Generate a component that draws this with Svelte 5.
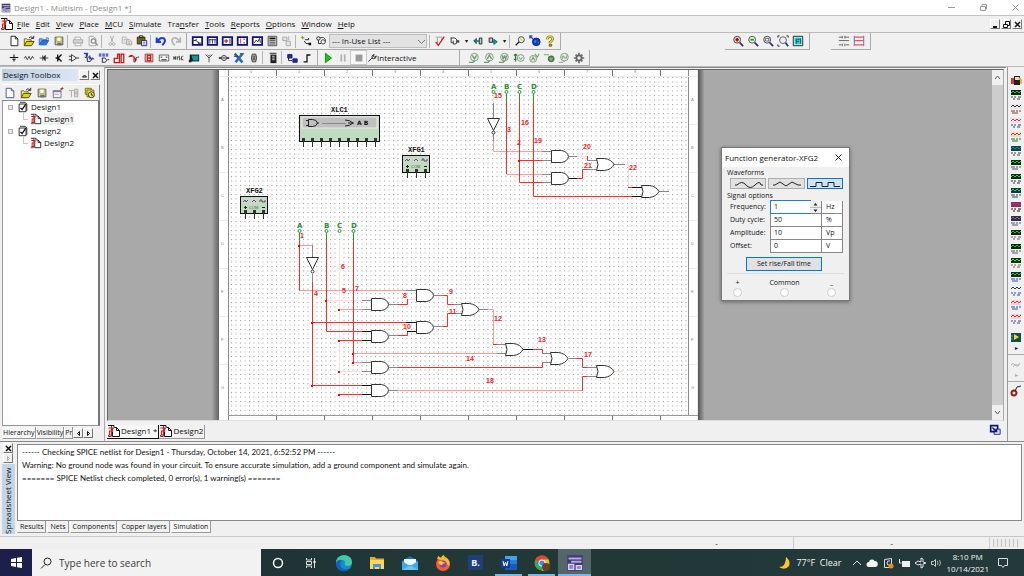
<script>
  // each icon is a list of [path, fill, stroke, strokeWidth] on a 14x14 box
  const K = '#111';
  const G = '#a4a4a4';
  const N = '#10107a';
  const R = '#d81818';
  const GR = '#6f9a6c';
  const icons = {
    new: [['M3.5 1.5h5l3 3v8h-8z', '#fff', K], ['M8.5 1.5v3h3', 'none', K]],
    newBlue: [['M2.5 1.5h6l3 3v8h-9z', '#fff', '#33449a'], ['M8.5 1.5v3h3', '#e8e850', '#33449a']],
    open: [['M1.5 12.5v-8h3l1 1h4v2', '#f4f07a', '#5d5a10'], ['M1.5 12.5l2.5-5h9l-3 5z', '#d9d321', '#3b3900'], ['M7 3.500q2-2.500 4.500-.5M12.500 1v3h-3', 'none', K]],
    folder: [['M1.5 11.500v-7h4l1 1h4v2', '#83b9ff', '#2a5fc0'], ['M1.500 11.500l3-5h8l-3 5z', '#2474ea', '#1c55b8'], ['M9 3.500h3v2', 'none', '#2a5fc0']],
    save: [['M2.500 2.500h9v9h-9z', '#cfcfc6', '#4c4c44'], ['M4.500 2.500h5v5h-5z', '#fffff0', '#b6ae20'], ['M5 9h5v3h-5z', '#6e6e66']],
    print: [['M3.500 5.500v-3h6l1 3', '#fff', G], ['M1.500 5.500h11v4h-11z', '#d6d6d6', G], ['M3.500 9.500h7v3h-7z', '#fff', G]],
    preview: [['M2.500 1.500h5l3 3v8h-8z', '#f8f8f8', G], ['M5 7a2.500 2.500 0 1 0 5 0a2.500 2.500 0 1 0-5 0M9.500 9l3 3', 'none', '#8c8c8c', 1.5]],
    cut: [['M5 1l3 7M9 1l-3 7', 'none', G], ['M3.500 10.500a1.500 1.500 0 1 0 3 0a1.500 1.500 0 1 0-3 0M7.500 10.500a1.500 1.500 0 1 0 3 0a1.500 1.500 0 1 0-3 0', 'none', G]],
    copy: [['M1.500 2.500h4l2 2v5h-6z', '#f8f8f8', G], ['M6.500 5.500h4l2 2v4h-6z', '#e4e4e4', G], ['M3 5h3M3 7h2M8 8h3M8 10h3', 'none', G]],
    paste: [['M1.500 2.500h9v8h-9z', '#6d6a18', '#2d2b08'], ['M4 1h4v2h-4z', '#ddd', K], ['M6.500 6.500h6v6h-6z', '#fff', N], ['M8 8.500h3M8 10.500h3', 'none', '#4a54c0']],
    undo: [['M2 3v5h5M3 7.500q3-5.500 7.500-3.500q3 3-2 8', 'none', '#1a3fd8', 2.4]],
    redo: [['M12 3v5h-5M11 7.500q-3-5.500-7.500-3.500q-3 3 2 8', 'none', '#b4b4b4', 2]],
    winWave: [['M2 2.500h11v9h-11z', '#fff', N, 2], ['M3 6.500h3v-2M6 6.500l3 3h3M9 8v3', 'none', K]],
    winGrid: [['M2 2.500h11v9h-11z', '#fff', N, 2], ['M3 5.500h9M4.500 5v5M7.500 5v5M10.500 5v5', 'none', '#222260']],
    winRed: [['M2 2.500h11v9h-11z', '#fff', N, 2], ['M4 7h4M6 5v4', 'none', R, 1.5], ['M10.500 4v6', 'none', K]],
    winBars: [['M2 2.500h11v9h-11z', '#fff', N, 2], ['M5.500 4v6', 'none', R], ['M9.500 4v2M9.500 8v2', 'none', K]],
    winGraph: [['M2 2.500h11v9h-11z', '#fff', N, 2], ['M4 9l2-3 2 2 2-4 1 5', 'none', K]],
    calc: [['M2.500 1.500h10v11h-10z', '#d8d8d8', '#444'], ['M4 3h7v2h-7z', '#111'], ['M4 6.500h7M4 8.500h7M4 10.500h7', 'none', '#444', 1]],
    grayDocs: [['M2 2.500h5v4h-5zM6 7.500h5v5h-5zM9 1.500v5', '#e4e4e4', G]],
    wizard: [['M3 1v4M1 3h4M2 1.500l3 3', 'none', '#9a9018'], ['M6 5.500h4v-2M5 7l2 3h5', 'none', K], ['M10 9h3v3h-3z', K]],
    database: [['M2 4a2 2 0 1 0 4 0a2 2 0 1 0-4 0M4 6v4h3', 'none', K], ['M6 3h4l2 2v3M7 8a2.500 2.500 0 1 0 5 0a2.500 2.500 0 1 0-5 0', '#eee', '#333']],
    check: [['M2 2.500h8M4 3v7M9 3v3', 'none', '#999'], ['M2 8l3 4L12 2', 'none', R, 1.500]],
    part: [['M2.500 3v6h2M2 3.500h5l3 3-2 4h-3v-4', '#fff', '#222'], ['M8 6h4v3h-4z', '#4f4f4f']],
    partLeft: [['M2 7l3-3v6z', '#168c8c', '#0a4a4a'], ['M5 7h3', 'none', '#188', 2], ['M8.500 3.500h3v7h-3z', '#ccc', K]],
    partRight: [['M2.500 3.500h4v5h-4z', '#ccc', K], ['M6 8h3M8 5l4 3-4 3z', '#1aa', '#066']],
    find: [['M5 5.500a3.500 3.500 0 1 0 7 0a3.500 3.500 0 1 0-7 0', '#f6f6da', '#222a70'], ['M6 8l-4 4', 'none', K, 1.500], ['M8 3v3h3', 'none', '#d8c810']],
    globe: [['M4 8a4.500 4.500 0 1 0 9 0a4.500 4.500 0 1 0-9 0', '#1530dd', '#0c1c90'], ['M6 6h3l-1 3-2 1zM10 8h2l-1 3z', '#25a048'], ['M1 1l4 4M1 4v-3h3', 'none', '#2040ff', 1.500]],
    help: [['M4 5q0-3 3-3t3 3q0 1.500-3 3.500v1', 'none', '#6d6808', 3], ['M4 5q0-3 3-3t3 3q0 1.500-3 3.500v1', 'none', '#e9df20', 1.500], ['M6 11h3v2h-3z', '#d5cc18', '#55520a']],
    zoomIn: [['M2 5.500a4 4 0 1 0 8 0a4 4 0 1 0-8 0', '#f0d8d8', '#333'], ['M4 5.500h4M6 3.500v4', 'none', '#b00', 2], ['M9 9l4 4', 'none', '#22308c', 2]],
    zoomOut: [['M2 5.500a4 4 0 1 0 8 0a4 4 0 1 0-8 0', '#e0f0d8', '#444'], ['M4 5.500h4', 'none', '#1a9a1a', 2], ['M9 9l4 4', 'none', '#22308c', 2]],
    zoomPage: [['M2 5.500a4 4 0 1 0 8 0a4 4 0 1 0-8 0', '#eee', '#333'], ['M4 4h4v3h-4z', '#fff', '#555'], ['M9 9l4 4', 'none', '#22308c', 2]],
    zoomFit: [['M3 6a4 4 0 1 0 8 0a4 4 0 1 0-8 0', '#eee', '#555'], ['M1 3v-2h2M11 1h2v2M1 11v2h2', 'none', K], ['M10 9l3 4', 'none', '#22308c', 2]],
    fullScreen: [['M1.500 1.500h11v11h-11z', '#cfe', K], ['M3 3h8v8h-8z', '#35c8d4'], ['M5 10v-5h4M5 7.500h3M10 4v6', 'none', '#0d5360']],
    ladder: [['M1 2.500h4M8 2.500h5M1 6.500h12M1 11.500h3M9 11.500h4M5 1v3M8 1v3M5 10v3M8 10v3', 'none', '#555']],
    rungs: [['M2 2.500h10M2 6.500h10M2 11.500h10', 'none', '#f05050', 1.500], ['M1.500 1v12M12.500 1v12', 'none', '#5555bb', 1]],
    source: [['M2 6.500h10M7 3v3M5 8.500h4M7 9v2', 'none', K, 1.200]],
    resistor: [['M1 7h1l1-2 2 4 2-4 2 4 2-4 1 2h1', 'none', '#333']],
    diode: [['M2 7h3M9 7h3M5.500 4v6M8.500 4v6l-3-3z', '#222', '#333']],
    transistor: [['M5.500 3v8M6 7l4-4M6 7l4 4M3 7h2', 'none', K, 1.500]],
    amp: [['M4 3v8l6-4zM1 5h3M1 9h3M10 7h3', 'none', '#222']],
    ttl: [['M2 2h3v3M2 6l3 1v4h3q4-2 0-5h-3M9 8h4', 'none', K], ['M1 1.500h5M4 2v4M8 4v4l4-1', 'none', '#3038d8', 1.500]],
    cmos: [['M5 7v5h3q4-2 0-5zM11 9h2', 'none', K], ['M1 2.500h3M5 2.500h3M9 2.500h3M1 4.500h3M5 4.500h3M9 4.500h3', 'none', '#3038d8', 1.500]],
    misc: [['M1.500 12.500v-5h4v-5h2v10zM9.500 2.500h3v10h-3z', '#fff', '#d01010', 1.500]],
    mixed: [['M1 6q3-4 6 0t3 3M7 5v7', 'none', '#e02020', 1.5], ['M2 5h3M10 6l-2 6M11 6h2', 'none', K]],
    indicator: [['M2.500 2.500h9v9h-9z', '#f4dada', '#803030'], ['M5 4h4v6h-4zM5 7h4', 'none', R, 1.500]],
    power: [['M1.500 3.500h11v7h-11z', '#f8f8f8', '#555'], ['M3 6h2M9 6h2M4 9h6', 'none', K]],
    text: [['M1 5v4M3 5v4M2 6v2M5 5v4M8 5h-1v2h1v2h-1M10 5v4h2M11 5h1', 'none', '#222']],
    periph: [['M2 3h11v8h-11z', '#122'], ['M4 4h8v6h-6z', '#0c9aa2'], ['M1 9h3v3h-3z', '#222']],
    rf: [['M7 12v-6M3 3l4 4 4-4M5 3l2 2 2-2', 'none', '#444']],
    electro: [['M1 7h3M10 7h3', 'none', K, 1.500], ['M4 7a3 3 0 1 0 6 0a3 3 0 1 0-6 0M6 6v2M8 6v2', '#ddd', '#333']],
    niX: [['M2 2l9 10M11 2l-8 10', 'none', '#2d68a8', 3], ['M8 2h5M1 5h5', 'none', '#333']],
    connector: [['M5 2.500h4q2 4 0 9h-4q-2-5 0-9z', '#ddd', '#222'], ['M6 4v6M8 4v6', 'none', K]],
    mcu: [['M4 3h7v10h-7z', '#222'], ['M3 1.500h8', 'none', K], ['M6 5h3M6 7h3M6 9h3', 'none', '#ddd']],
    hier: [['M2 3h5v4h-5zM8 8h5v4h-5z', '#2a318e', N], ['M3 7v3h4', 'none', K]],
    bus: [['M3 11.500h4v-8h4', 'none', K, 1.500]],
    play: [['M4 1.500v11l7-5.500z', '#18c418', '#0a860a']],
    pause: [['M4 3h2v8h-2zM8 3h2v8h-2z', '#b0b0b0']],
    stop: [['M3 3h8v8h-8z', '#9a9a9a']],
    wrench: [['M2 12l5-5M7 7q-1-4 3-5l-1 3 2 1 2-2q0 4-4 4z', 'none', K, 1.200]],
    probeV: [['M3 6a4.500 4.500 0 1 0 9 0a4.500 4.500 0 1 0-9 0', '#e4efe2', GR], ['M5 4l2.500 4L10 4M1 12h5l2-2', 'none', GR, 1.500]],
    probeA: [['M3 6a4.500 4.500 0 1 0 9 0a4.500 4.500 0 1 0-9 0', '#e4efe2', GR], ['M5 8l2.500-4.500L10 8M1 12h5l2-2', 'none', GR, 1.500]],
    probeW: [['M3 6a4.500 4.500 0 1 0 9 0a4.500 4.500 0 1 0-9 0', '#e4efe2', GR], ['M5 4l1 4 1.500-3L9 8l1-4M1 12h5l2-2', 'none', GR, 1.500]],
    probeD: [['M5 7a4 4 0 1 0 8 0a4 4 0 1 0-8 0', '#e4efe2', GR], ['M7 6l2 3 2-3', 'none', GR], ['M1 3.500h4M3 2v9M1 8.500h3', 'none', '#3d713a', 1.500]],
    probeAV: [['M2 8a4 4 0 1 0 8 0a4 4 0 1 0-8 0', '#e4efe2', GR], ['M4 10l2-4 2 4M8 2l3 4 2-4', 'none', GR, 1.200]],
    probeRef: [['M6 8a3.500 3.500 0 1 0 7 0a3.500 3.500 0 1 0-7 0', '#57834f', '#3d713a'], ['M1 3h6M8 7l1.500 2L11 7', 'none', '#8db58a', 1.500]],
    probeDig: [['M3 6a4.500 4.500 0 1 0 9 0a4.500 4.500 0 1 0-9 0', '#e4efe2', GR], ['M5 8v-3h2v2h3v-3M1 12h5l2-2', 'none', GR]],
    gear: [['M7 1v12M1 7h12M3 3l8 8M11 3l-8 8', 'none', '#6a6a6a', 2], ['M4 7a3 3 0 1 0 6 0a3 3 0 1 0-6 0', '#f0f0f0', '#666', 2]],
    rename: [['M1.500 4.500h9v8h-9z', '#f4f4f4', '#667'], ['M1 4h10v2h-10z', '#6d80a8'], ['M3 8.500h5', 'none', '#99a'], ['M10 3l3-2', 'none', R, 2]],
    tag: [['M1 4h6M4 4v8M7.500 2.500h4v9h-4zM8 6h3M8 8h3', '#ddd', G]],
    history: [['M1.500 1.500h7v7h-7z', '#e5dd2a', '#6a6510'], ['M3.500 3.500h8v8h-8z', '#f0e960', '#6a6510'], ['M5 9a3.500 3.500 0 1 0 7 0a3.500 3.500 0 1 0-7 0', '#ffee30', '#224'], ['M8.500 7v2.500h2', 'none', N]],
    design: [['M2.500 3.500h8v9h-8z', '#fff', K], ['M3.500 1.500h6l2 2v8', 'none', '#222'], ['M4 8l2 2 4-6', 'none', K, 1.500]],
    sheet: [['M1 1.500h6v4', '#fff', K], ['M7.500 3.500h2l3 3v6h-7v-5', '#fff', K], ['M9.500 3.500v3h3', 'none', K], ['M1.500 4h4v3h-3v4h3M4.500 2v10', 'none', '#d02020', 1.200], ['M1.500 11v1.500h3', 'none', '#444']],
    cascade: [['M2 2h8v7h-8z', '#fff', N, 2], ['M6 6h7v6h-7z', '#dbe2ff', N], ['M4 4l5 5M9 6v3h-3', 'none', N, 1.500]],
    app: [['M1 1h12v12h-12z', '#3d3c78'], ['M2 3.500h10M4 6h8', 'none', '#b9a6d8', 1.500], ['M2 8h4v4h-4zM8 9h4v3h-4z', '#8d86b8', '#dcd4ee']]
  };

  const fileTools = [
    ['New', 'new'], ['Open', 'open'], ['Open sample', 'folder'], ['Save', 'save'], null,
    ['Print', 'print'], ['Print preview', 'preview'], null,
    ['Cut', 'cut'], ['Copy', 'copy'], ['Paste', 'paste'], null, ['Undo', 'undo'], ['Redo', 'redo']
  ];
  const viewTools = [
    ['Design Toolbox', 'winWave'], ['Spreadsheet View', 'winGrid'], ['SPICE Netlist Viewer', 'winRed'],
    ['Breadboard', 'winBars'], ['Grapher', 'winGraph'], ['Postprocessor', 'calc'], ['Parent sheet', 'grayDocs'], null,
    ['Component Wizard', 'wizard'], ['Database Manager', 'database']
  ];
  const partTools = [
    ['Source', 'source'], ['Basic', 'resistor'], ['Diode', 'diode'], ['Transistor', 'transistor'], ['Analog', 'amp'],
    ['TTL', 'ttl'], ['CMOS', 'cmos'], ['Misc digital', 'misc'], ['Mixed', 'mixed'], ['Indicator', 'indicator'],
    ['Power', 'power'], ['Misc', 'text'], ['Peripherals', 'periph'], ['RF', 'rf'], ['Electromechanical', 'electro'],
    ['NI', 'niX'], ['Connector', 'connector'], null, ['MCU', 'mcu'], null, ['Hierarchical block', 'hier'], ['Bus', 'bus']
  ];
  const zoomTools = [['Zoom in', 'zoomIn'], ['Zoom out', 'zoomOut'], ['Zoom area', 'zoomPage'], ['Zoom sheet', 'zoomFit'], ['Full screen', 'fullScreen']];
  const probeTools = [
    ['Voltage', 'probeV'], ['Current', 'probeA'], ['Power', 'probeW'], ['Differential', 'probeD'],
    ['Voltage and current', 'probeAV'], ['Reference', 'probeRef'], ['Digital', 'probeDig'], ['Probe settings', 'gear']
  ];
  const boxTools = [['New design', 'newBlue'], ['Open design', 'open'], ['Save design', 'save'], ['Close design', 'rename'], ['Rename', 'tag'], ['History', 'history']];

  const menus = [
    ['', 'F', 'ile'], ['', 'E', 'dit'], ['', 'V', 'iew'], ['', 'P', 'lace'], ['', 'M', 'CU'], ['', 'S', 'imulate'],
    ['Tra', 'n', 'sfer'], ['', 'T', 'ools'], ['', 'R', 'eports'], ['', 'O', 'ptions'], ['', 'W', 'indow'], ['', 'H', 'elp']
  ];

  // right-hand instrument strip: screen colour, trace colour, base colour
  const instruments = [
    ['Function generator', '#0a2c12', '#2fbf4a', '#444'], ['Wattmeter', '#e8e8e8', '#333', '#933'],
    ['Oscilloscope', '#f3dde2', '#c04070', '#3d3d6a'], ['Four channel oscilloscope', '#e6e2c0', '#d03030', '#2d702d'],
    ['Bode plotter', '#0b4a38', '#2a70d8', '#444'], ['Frequency counter', '#083008', '#30c030', '#555'],
    ['Word generator', '#0c2c12', '#35d050', '#333'], ['Logic converter', '#0b3a44', '#2fd050', '#345'],
    ['Logic analyzer', '#b02050', '#3060c0', '#111'], ['IV analyzer', '#1a3560', '#d84040', '#555'],
    ['Distortion analyzer', '#152515', '#38b838', '#666'], ['Spectrum analyzer', '#052a05', '#32b832', '#555'],
    ['Network analyzer', '#0a3a0a', '#48d848', '#666'], ['Agilent generator', '#10301c', '#38b848', '#3048d0'],
    ['Agilent multimeter', '#eef', '#333', '#3040d8'], ['Agilent oscilloscope', '#ecd0d8', '#d04060', '#3848b8'],
    ['Tektronix oscilloscope', '#ecd0d8', '#d03030', '#553a90']
  ];

  const RED = '#ff2a2a';
  const PINK = '#ff9c9c';
  const PALE = '#ffdcdc';
  const GRAY = '#888';
  const BLACK = '#111';
  const wires = [
    // upper circuit
    [PALE, 'M493.500 94V103M577 156.500H587M625 164.500H628.500V187'],
    [PINK, 'M493.500 141V151.500H542M506.500 174.500H542'],
    [RED, 'M506.500 102V174M519.500 102V182.500H542M519.500 160.500H542M533.500 102V196.500H632M587.500 156V160.500M577 178.500H582.500V169.500H587M628 187.500H632'],
    [GRAY, 'M493.500 103V118M493.500 134V141M542 151.500H551M542 160.500H551M542 174.500H551M542 182.500H551M569 156.500H577M587 160.500H597M587 169.500H597M613 164.500H625M659 191.500H669'],
    [BLACK, 'M569 178.500H577M632 187.500H642M632 196.500H642'],
    // lower circuit
    [PALE, 'M339.500 241V394M326.500 300.500H362M339.500 371.500H362M407 299.500H416M614 371.500H623'],
    [PINK, 'M299.500 245.500H312.500M299 290.500H406M339.500 309.500H362M353.500 353.500H497M353.500 362.500H362M398 390.500H582.500M488 309.500H493.500V344'],
    [RED, 'M299.500 241V290.500M312.500 282V385.500H362M312.500 322.500H406M326.500 241V331.500H362M353.500 241V362.500M339 340.500H362M339 394.500H362M398 304.500H407.500V299M398 335.500H407.500V331M398 367.500H542.500V362M443 295.500H447.500V304.500H453M443 326.500H447.500V313.500H453M493 344.500H497M533 349.500H542.500V353.500M577 358.500H582.500V367.500H587M582.500 391V376.500H587'],
    [GRAY, 'M312.500 245V257M312.500 274V282M362 300.500H371M362 309.500H371M362 362.500H371M362 371.500H371M389 304.500H398M389 335.500H398M389 367.500H398M389 390.500H398M406 290.500H416M434 295.500H443M434 326.500H443M453 304.500H463M453 313.500H463M479 309.500H488M497 344.500H507M497 353.500H507M542 353.500H552M542 362.500H552M569 358.500H577M587 367.500H597M587 376.500H597'],
    [BLACK, 'M362 331.500H371M362 340.500H371M362 385.500H371M362 394.500H371M406 322.500H416M407 331.500H416M523 349.500H533'],
    // input stubs
    ['#2a962a', 'M506.500 94V102M519.500 94V102M533.500 94V102M299.500 233V241M326.500 233V241M353.500 233V241']
  ];
  const andGates = [[551, 156], [551, 178], [371, 304], [371, 336], [371, 367], [371, 390], [416, 295], [416, 327]];
  const orGates = [[597, 164], [642, 191], [462, 309], [506, 349], [551, 358], [597, 371]];
  const inverters = [[493.5, 118.5], [312.5, 257.5]];
  const dots = [[519, 160], [299, 245], [326, 300], [312, 322], [312, 385], [339, 309], [339, 340], [339, 371], [339, 394], [353, 353], [353, 362]];
  const pins = [
    ['A', 493, 92], ['B', 506, 92], ['C', 519, 92], ['D', 533, 92],
    ['A', 299, 231], ['B', 326, 231], ['C', 339, 231], ['D', 353, 231]
  ];
  const nets = [
    [15, 494, 98], [3, 507, 132], [16, 521, 125], [2, 517, 145], [19, 534, 143], [20, 583, 149], [21, 584, 168], [22, 629, 170],
    [1, 300, 238], [6, 341, 269], [5, 342, 293], [7, 355, 291], [4, 314, 296], [8, 403, 298], [9, 449, 294], [10, 403, 329],
    [11, 449, 314], [12, 494, 321], [13, 538, 342], [14, 466, 361], [17, 584, 357], [18, 486, 383]
  ];
  const ticks = [276, 324, 372, 420, 468, 516, 564, 612, 660];
  const zones = ['A', 'B', 'C', 'D', 'E', 'F', 'G'];

  let params = $state([
    { id: 'freq', label: 'Frequency:', value: '1', unit: 'Hz' },
    { id: 'duty', label: 'Duty cycle:', value: '50', unit: '%' },
    { id: 'amp', label: 'Amplitude:', value: '10', unit: 'Vp' },
    { id: 'offset', label: 'Offset:', value: '0', unit: 'V' }
  ]);
  let waveform = $state('square');
  const waveforms = [
    ['sine', 'M4 6h2q5-5 9 0t9 0t6 0h2'],
    ['triangle', 'M4 6h2l5-3 6 4 6-4 6 3h3'],
    ['square', 'M2 7.500h6v-4h6v4h6v-4h6v4h6']
  ];
</script>

{#snippet icon(name)}
  <svg class="icon" width="14" height="14" viewBox="0 0 14 14" aria-hidden="true">
    {#each icons[name] as [d, fill, stroke, w]}
      <path {d} fill={fill} stroke={stroke ?? 'none'} stroke-width={w ?? 1} />
    {/each}
  </svg>
{/snippet}

{#snippet tools(list)}
  {#each list as tool}
    {#if tool}
      <button class="tool" title={tool[0]} aria-label={tool[0]}>{@render icon(tool[1])}</button>
    {:else}
      <span class="sep"></span>
    {/if}
  {/each}
{/snippet}

{#snippet generator(x, y, name)}
  <g transform="translate({x} {y})">
    <text class="part-name" x="6" y="-3">{name}</text>
    <rect x="0.5" y="0.5" width="27" height="17" fill="#c0dcc0" stroke="#111" />
    <path d="M2 3h7v4h-7zM11 3h6v4h-6zM19 3h7v4h-7z" fill="#d9d0d9" />
    <path d="M3 6l2-2 1 2 2-2M12 6l2-2 2 2M20 6v-2h2v2h3v-2" fill="none" stroke="#555" />
    <path d="M4 11.500h3M5.500 10v3M22 11.500h3" stroke="#222" />
    <text class="micro" x="9" y="13">COM</text>
    <path d="M5.500 15v8M14.500 15v8M23.500 15v8" stroke="#333" />
    <path d="M4 14h3v3h-3zM13 14h3v3h-3zM22 14h3v3h-3z" fill="#333" />
  </g>
{/snippet}

<div class="app">
  <header class="titlebar">
    {@render icon('app')}
    <span class="title">Design1 - Multisim - [Design1 *]</span>
    <div class="window-controls">
      <button aria-label="Minimize"><svg width="9" height="9"><path d="M1 4.500h7" /></svg></button>
      <button aria-label="Restore"><svg width="9" height="9"><path d="M1.500 3.500h5v4h-5zM3 3V1.500h4.500v4.500H7" stroke="#444" /></svg></button>
      <button aria-label="Close"><svg width="9" height="9"><path d="M1.500 1.500l6 6M7.500 1.500l-6 6" /></svg></button>
    </div>
  </header>

  <nav class="menubar">
    {@render icon('sheet')}
    {#each menus as [pre, key, post]}
      <button class="menu">{pre}<u>{key}</u>{post}</button>
    {/each}
    <div class="mdi-controls">
      <button class="bevel" aria-label="Minimize design"><svg width="7" height="7"><path d="M1 6h4" stroke-width="2" /></svg></button>
      <button class="bevel" aria-label="Restore design"><svg width="7" height="7"><path d="M.5 3.500h4v3h-4zM2.500 3V.500h4v4H5" /></svg></button>
      <button class="bevel" aria-label="Close design"><svg width="7" height="7"><path d="M1 1l5 5M6 1L1 6" stroke-width="1.500" /></svg></button>
    </div>
  </nav>

  <div class="toolbar">
    <div class="group">{@render tools(fileTools)}</div>
    <div class="group">
      {@render tools(viewTools)}
      <span class="in-use">
        <select aria-label="In-use list"><option>--- In-Use List ---</option></select>
        <svg width="9" height="9"><path d="M1 3l3.500 3.500L8 3" /></svg>
      </span>
      <span class="sep"></span>
      {@render tools([['ERC', 'check'], ['Transfer', 'part']])}
      <button class="caret" aria-label="Transfer options">▾</button>
      {@render tools([['Back annotate', 'partLeft'], ['Forward annotate', 'partRight']])}
      <button class="caret" aria-label="Annotate options">▾</button>
      <span class="sep"></span>
      {@render tools([['Find', 'find'], ['Web', 'globe'], ['Help', 'help']])}
    </div>
    <div class="group float zoom">{@render tools(zoomTools)}</div>
    <div class="group float">{@render tools([['Ladder', 'ladder'], ['Rungs', 'rungs']])}</div>
  </div>

  <div class="toolbar second">
    <div class="group">{@render tools(partTools)}</div>
    <div class="group sim">
      {@render tools([['Run', 'play'], ['Pause', 'pause']])}
      <span class="sunk">{@render tools([['Stop', 'stop']])}</span>
      <button class="interactive">{@render icon('wrench')}Interactive</button>
    </div>
    <div class="group float">{@render tools(probeTools)}</div>
  </div>

  <main class="main">
    <aside class="toolbox">
      <div class="panel-head">
        <h2>Design Toolbox</h2>
        <button class="bevel" aria-label="Collapse panel"><svg width="7" height="7"><path d="M1.500 5l2-2 2 2z" stroke="#999" /></svg></button>
        <button class="bevel" aria-label="Close panel"><svg width="7" height="7"><path d="M1 1l5 5M6 1L1 6" stroke-width="1.500" /></svg></button>
      </div>
      <div class="box-tools">{@render tools(boxTools)}</div>
      <ul class="tree">
        {#each ['Design1', 'Design2'] as name, i}
          <li>
            <div class="node"><span class="twist"></span>{@render icon('design')}<span>{name}</span></div>
            <ul>
              <li class="node leaf"><span class="branch"></span>{@render icon('sheet')}<span class:picked={i === 0}>{name}</span></li>
            </ul>
          </li>
        {/each}
      </ul>
      <div class="tabs box-tabs">
        <button class="active">Hierarchy</button>
        <button>Visibility</button>
        <button>Pr</button>
        <button class="bevel" aria-label="Previous tab"><svg width="7" height="7"><path d="M4.500 1.500v4l-2-2z" fill="#111" /></svg></button>
        <button class="bevel" aria-label="Next tab"><svg width="7" height="7"><path d="M2.500 1.500v4l2-2z" fill="#111" /></svg></button>
      </div>
    </aside>

    <section class="workspace">
      <div class="canvas">
        <svg class="sheet" width="492" height="350" viewBox="212 70 492 350">
          <defs>
            <pattern id="grid" x="231" y="77" width="4.5" height="4.5" patternUnits="userSpaceOnUse">
              <rect width="1" height="1" fill="#999" />
            </pattern>
            <linearGradient id="edge">
              <stop offset="0" stop-color="#a6a6a6" />
              <stop offset="1" stop-color="#636363" />
            </linearGradient>
            <linearGradient id="edge-right">
              <stop offset="0" stop-color="#555" />
              <stop offset="1" stop-color="#a0a0a0" />
            </linearGradient>
          </defs>
          <rect x="212" y="70" width="7" height="350" fill="url(#edge)" />
          <rect x="698" y="70" width="6" height="350" fill="url(#edge-right)" />
          <rect x="219" y="70" width="479" height="350" fill="#fff" />
          <rect x="229" y="77" width="460" height="338" fill="url(#grid)" />
          <path d="M228.500 70V420M688.500 70V415" stroke="#8c8c8c" />
          <path d="M219 76.500H698M219 172.500h9M219 220.500h9M219 268.500h9M219 316.500h9M219 364.500h9M689 124.500h9M689 172.500h9M689 220.500h9M689 268.500h9M689 316.500h9M689 364.500h9M697.500 70V420" stroke="#ececec" />
          <path d="M228 415.500H698" stroke="#999" />
          {#each ticks as x, i}
            <path d="M{x + 0.5} 70v6M{x + 0.5} 416v4" stroke="#777" />
            <text class="ruler" x={x - 26} y="73">{i}</text>
          {/each}
          {#each zones as z, i}
            <text class="ruler" x="221" y={101 + i * 48}>{z}</text>
            <text class="ruler" x="691" y={101 + i * 48}>{z}</text>
          {/each}

          <g transform="translate(299 115)">
            <text class="part-name" x="32" y="-3">XLC1</text>
            <rect x="0.5" y="0.5" width="80" height="26" fill="#c0dcc0" stroke="#111" />
            <rect x="3" y="2" width="75" height="11" fill="#c0c0c0" stroke="#e8e8e8" />
            <path d="M7 5.500h2M7 10.500h2M9.500 4.500h4q4 0 5 3.500q-1 3.500-5 3.500h-4zM18 8h2M46 5q5 0 8 3q-3 3-8 3M49 8h6" fill="none" stroke="#222" />
            <path d="M23 8.500h24" stroke="#888" />
            <text class="xlc-text" x="58" y="10">A B</text>
            {#each Array(9) as _, i}
              <path d="M{4.5 + i * 9} 24v8" stroke="#333" />
              <rect x={3 + i * 9} y="23" width="3" height="3" fill="#333" />
            {/each}
          </g>
          {@render generator(402, 155, 'XFG1')}
          {@render generator(240, 196, 'XFG2')}

          {#each wires as [color, d]}
            <path {d} fill="none" stroke={color} />
          {/each}
          {#each dots as [x, y]}
            <rect x={x - 1} {y} width="2" height="2" fill="#f00" />
          {/each}
          {#each andGates as [x, y]}
            <path d="M{x + 0.5} {y - 5.5}h10q6 1 7 6q-1 5-7 6h-10z" class="gate" />
          {/each}
          {#each orGates as [x, y]}
            <path d="M{x - 0.5} {y - 5.5}h8q7 1 9.500 6q-2.500 5-9.500 6h-8q3-6 0-12z" class="gate" />
          {/each}
          {#each inverters as [x, y]}
            <path d="M{x - 6} {y}h12l-6 12z" class="gate" />
            <circle cx={x} cy={y + 14} r="1.500" class="gate" />
          {/each}
          {#each pins as [name, x, y]}
            <text class="pin" x={x - 2} y={y - 3}>{name}</text>
            <circle cx={x + 0.5} cy={y} r="1.500" fill="#fff" stroke="#2a962a" />
          {/each}
          {#each nets as [n, x, y]}
            <text class="net" {x} {y}>{n}</text>
          {/each}
        </svg>
        <div class="scrollbar">
          <button aria-label="Scroll up"><svg width="9" height="9"><path d="M2 6l2.500-3L7 6" /></svg></button>
          <span class="thumb"></span>
          <button aria-label="Scroll down"><svg width="9" height="9"><path d="M2 3l2.500 3L7 3" /></svg></button>
        </div>
      </div>
      <div class="doc-tabs">
        <button class="active">{@render icon('sheet')}Design1 *</button>
        <button>{@render icon('sheet')}Design2</button>
        <span class="tool cascade">{@render icon('cascade')}</span>
      </div>

      <form class="dialog" aria-label="Function generator-XFG2">
        <div class="dialog-title">
          <span>Function generator-XFG2</span>
          <button type="button" aria-label="Close dialog"><svg width="9" height="9"><path d="M1.500 1.500l6 6M7.500 1.500l-6 6" /></svg></button>
        </div>
        <div class="dialog-body">
          <div class="caption">Waveforms</div>
          <div class="waves">
            {#each waveforms as [name, d]}
              <button type="button" class:on={waveform === name} aria-label={name} onclick={() => (waveform = name)}>
                <svg width="34" height="9" viewBox="0 0 34 9"><path {d} /></svg>
              </button>
            {/each}
          </div>
          <div class="caption">Signal options</div>
          <div class="params">
            {#each params as p, i}
              <label for={p.id}>{p.label}</label>
              <span class="field" class:focus={i === 0}>
                <input id={p.id} bind:value={p.value} />
                {#if i === 0}
                  <svg class="spin" width="11" height="12"><path d="M0 6.500h11" /><path d="M5.500 2l2 2.500h-4zM5.500 11l2-2.500h-4z" /></svg>
                {/if}
              </span>
              <span class="unit">{p.unit}</span>
            {/each}
          </div>
          <button type="button" class="rise">Set rise/Fall time</button>
          <div class="terminals">
            <label><span>+</span><input type="radio" name="terminal" /></label>
            <label><span>Common</span><input type="radio" name="terminal" /></label>
            <label><span>_</span><input type="radio" name="terminal" /></label>
          </div>
        </div>
      </form>
    </section>

    <aside class="instruments">
      <button class="instrument" aria-label="Multimeter">
        <svg width="12" height="11"><path d="M1 3h3v6h-3z" fill="#d33" /><path d="M4 1h6v9h-6z" fill="#222" /><path d="M5 2h4v3h-4z" fill="#ddd" /><path d="M9 3l2 2v4" stroke="#e0c020" stroke-width="2" fill="none" /></svg>
      </button>
      {#each instruments as [name, screen, trace, base], i}
        <button class="instrument" aria-label={name}>
          <svg width="12" height="11">
            <path d="M1 1h10v5h-10z" fill={screen} />
            <path d="M1 4l2-2 2 2 2-2 2 2 2-2" fill="none" stroke={trace} />
            <path d={i % 2 ? 'M1 8h4M6 8h2M9 8h2M2 10h6' : 'M1 8h2M4 8h2M8 8h3M3 10h2M7 10h3'} stroke={base} />
          </svg>
        </button>
      {/each}
      <button class="instrument lab" aria-label="LabVIEW">
        <svg width="12" height="11"><path d="M1 1h10v9h-10z" fill="#184a48" /><path d="M4 2v6l5-3z" fill="#f0e020" /><path d="M1 4h2M1 7h2" stroke="#30b0ff" /></svg>
      </button>
      <span class="more">▸</span>
      <hr />
      <button class="instrument" aria-label="Probe clip">
        <svg width="12" height="11"><path d="M1 6q2-3 4 0t5-2M3 8q3-4 6-1" fill="none" stroke="#b0b0b0" /></svg>
      </button>
      <span class="more pale">▸</span>
      <hr />
      <button class="instrument" aria-label="Current clamp">
        <svg width="12" height="12"><path d="M1.500 8a2.500 2.500 0 1 0 5 0a2.500 2.500 0 1 0-5 0" fill="#f0f0f0" stroke="#a01818" stroke-width="2" /><path d="M5 6l2-4 4-1" fill="none" stroke="#222" /></svg>
      </button>
    </aside>
  </main>

  <section class="spreadsheet">
    <div class="side">
      <button class="bevel" aria-label="Close spreadsheet"><svg width="7" height="7"><path d="M1 1l5 5M6 1L1 6" stroke-width="1.500" /></svg></button>
      <button class="bevel" aria-label="Expand spreadsheet"><svg width="7" height="7"><path class="off" d="M2.500 1.500v4l2-2z" /></svg></button>
      <h2>Spreadsheet View</h2>
    </div>
    <div class="log-area">
      <div class="log">
        <p>------ Checking SPICE netlist for Design1 - Thursday, October 14, 2021, 6:52:52 PM ------</p>
        <p>Warning: No ground node was found in your circuit. To ensure accurate simulation, add a ground component and simulate again.</p>
        <p>======= SPICE Netlist check completed, 0 error(s), 1 warning(s) =======</p>
      </div>
      <div class="tabs">
        <button>Results</button>
        <button class="nets">Nets</button>
        <button>Components</button>
        <button>Copper layers</button>
        <button class="active">Simulation</button>
      </div>
    </div>
  </section>

  <footer class="status">
    <span class="msg"></span>
    <span class="cell">-</span>
    <span class="cell">-</span>
    <span class="meter"></span>
  </footer>

  <div class="taskbar">
    <button class="start" aria-label="Start">
      <svg width="11" height="11"><path d="M0 2l5-1v4H0zM6 .8L11 0v5H6zM0 6h5v4l-5-1zM6 6h5v5l-5-.8z" fill="#fff" /></svg>
    </button>
    <label class="search">
      <svg width="12" height="12"><path d="M4 4.500a3.500 3.500 0 1 0 7 0a3.500 3.500 0 1 0-7 0M5 7.500L1 11.500" fill="none" stroke="#222" /></svg>
      <input placeholder="Type here to search" />
    </label>
    <button class="task" aria-label="Cortana"><svg width="12" height="12"><circle cx="6" cy="6" r="4.500" fill="none" stroke="#fff" stroke-width="1.500" /></svg></button>
    <button class="task" aria-label="Task View"><svg width="12" height="12"><path d="M1.500 1v2h5V1M1.500 11V9h5v2M1.500 4.500h5v3h-5zM9.500 1v10" fill="none" stroke="#ddd" /><path d="M8.500 4h2v2h-2z" fill="#fff" /></svg></button>
    <button class="task" aria-label="Edge">
      <svg width="18" height="18"><circle cx="9" cy="9" r="8" fill="#1689d8" /><path d="M1 9q0-7 8-8q8 1 8 7q0 4-5 4q-3 0-2-3q0-3-3-3q-5 0-6 3z" fill="#40c9a2" /><path d="M1 9q2-4 6-3q-3 3-1 7q3 4 9 1q-3 4-7 3q-7-1-7-8z" fill="#1263b8" /></svg>
    </button>
    <button class="task" aria-label="File Explorer">
      <svg width="18" height="18"><path d="M2 3h5l1 1.500h8V15H2z" fill="#e8a92a" /><path d="M2 6h14v9H2z" fill="#ffd65c" /><path d="M5 10h8v5h-2v-2H7v2H5z" fill="#3f9be0" /></svg>
    </button>
    <button class="task" aria-label="Mail">
      <svg width="18" height="18"><path d="M1 7l8-5 8 5v9H1z" fill="#1272c8" /><path d="M3 5h12v6H3z" fill="#f5faff" /><path d="M1 7l8 5 8-5v9H1z" fill="#3dabf0" /><path d="M1 16l8-5 8 5z" fill="#65c6fb" /></svg>
    </button>
    <button class="task" aria-label="Firefox">
      <svg width="18" height="18"><circle cx="9" cy="10" r="7" fill="#ff5a2a" /><path d="M3 5q1-2 1-3 2 1 3 2 1-3 3-3 0 2 3 3 4 4 2 8-6-7-12-7z" fill="#ffb82a" /><circle cx="9" cy="10" r="3.500" fill="#7b3fd0" /><path d="M4 8q3-2 5 0l3 1q-3 0-4 2-2 1-4-3z" fill="#ffc830" /></svg>
    </button>
    <button class="task" aria-label="B"><span class="b-tile">B.</span></button>
    <button class="task running" aria-label="Word">
      <svg width="18" height="18"><path d="M5 2h12v4H5z" fill="#41a5ee" /><path d="M5 6h12v4H5z" fill="#2b7cd3" /><path d="M5 10h12v6H5z" fill="#185abd" /><path d="M1 5h9v9H1z" fill="#103f91" /><path d="M3 7l1.200 5 1.300-4 1.300 4L8 7" fill="none" stroke="#fff" /></svg>
    </button>
    <button class="task running" aria-label="Chrome">
      <svg width="18" height="18"><circle cx="9" cy="9" r="7.500" fill="#3aa757" /><path d="M2.500 5q2-3.500 6.500-3.500T15.500 5.500H9L5.500 9z" fill="#ea4335" /><path d="M15.500 5.500q2 5-1 8.500T8.500 16.500L12 9.500 11 5.500z" fill="#fbbc05" /><circle cx="9" cy="9" r="3.500" fill="#fff" /><circle cx="9" cy="9" r="2.600" fill="#4285f4" /><circle cx="13" cy="13" r="4" fill="#6a3f2c" /></svg>
    </button>
    <button class="task running current" aria-label="Multisim">{@render icon('app')}</button>

    <div class="tray">
      <svg width="14" height="14"><path d="M8 1q5 4 3 9q-4 5-10 1q7 0 7-10z" fill="#ffc52e" /></svg>
      <span class="weather">77°F&nbsp; Clear</span>
      <svg width="10" height="10"><path d="M1 7l4-4 4 4" fill="none" stroke="#ddd" /></svg>
      <svg width="12" height="12"><path d="M3 10a2.500 2.500 0 0 1 0-5a3 3 0 0 1 5.500-1a3 3 0 0 1 .5 6z" fill="#f4f4f4" /></svg>
      <svg width="12" height="12"><path d="M2.500 2.500l7-1v9h-7z" fill="none" stroke="#ddd" /><path d="M8 4q-3-1-3 2t3 2" fill="none" stroke="#ddd" /><circle cx="9" cy="9" r="2.500" fill="#f08a1d" /></svg>
      <svg width="12" height="12"><path d="M4 4h8v6H4z" fill="#f0f0f0" /><path d="M1.500 2v4h2" fill="none" stroke="#eee" /></svg>
      <svg width="12" height="12"><path d="M1 6l3-2 3 1V1l2 1v3l3 1-3 1v3l-2 1V7L4 8z" fill="none" stroke="#e4e4e4" /></svg>
      <svg width="12" height="12"><path d="M1.500 4.500h2l2-2v7l-2-2h-2z" fill="none" stroke="#ccc" /><path d="M7.500 4q1 2 0 4M9.500 3q2 3 0 6" fill="none" stroke="#aaa" /></svg>
      <time class="clock">8:10 PM<br />10/14/2021</time>
      <svg width="12" height="12"><path d="M1.500 1.500h9v7h-3l-1.500 2-1.500-2h-3z" fill="none" stroke="#ddd" /></svg>
    </div>
  </div>
</div>

<style>
  :global(body) {
    margin: 0;
  }

  .app {
    display: flex;
    flex-direction: column;
    min-height: 100vh;
    background: #f0f0f0;
    color: #111;
    font-family: 'Open Sans', 'Noto Sans', sans-serif;
    font-size: 8px;
    line-height: 12px;
    overflow: hidden;
  }

  button {
    display: inline-flex;
    align-items: center;
    justify-content: center;
    margin: 0;
    padding: 0;
    border: 0;
    background: none;
    color: inherit;
    font: inherit;
    white-space: nowrap;
  }

  input,
  select {
    font: inherit;
    color: inherit;
  }

  h2,
  p,
  ul {
    margin: 0;
    padding: 0;
    font-size: 8px;
    font-weight: 400;
    list-style: none;
  }

  svg {
    display: block;
    flex: none;
  }

  .titlebar {
    display: flex;
    align-items: center;
    height: 15px;
    background: #fff;
    color: #8a8a8a;
    border-bottom: 1px solid #c4c4c4;
  }

  .titlebar .icon {
    width: 12px;
    height: 10px;
  }

  .title {
    margin-left: 2px;
  }

  .window-controls {
    display: flex;
    gap: 22px;
    margin-left: auto;
    padding-right: 3px;
  }

  .window-controls button {
    margin-right: 1px;
  }

  .window-controls path {
    fill: none;
    stroke: #999;
  }

  .menubar {
    display: flex;
    align-items: center;
    height: 16px;
    border-bottom: 1px solid #bbb;
  }

  .menubar .icon {
    margin-right: 3px;
  }

  .menu {
    margin-right: 6px;
  }

  .menu u {
    text-underline-offset: 1px;
  }

  .mdi-controls {
    display: flex;
    gap: 1px;
    margin-left: auto;
    padding-right: 2px;
  }

  .bevel {
    flex: none;
    width: 10px;
    height: 10px;
    background: #f0f0f0;
    border: 1px solid;
    border-color: #fff #777 #777 #fff;
    box-sizing: border-box;
  }

  .bevel path {
    fill: none;
    stroke: #111;
  }

  .bevel .off {
    stroke: #aaa;
  }

  .toolbar {
    display: flex;
    height: 17px;
  }

  .second {
    height: 16px;
    border-bottom: 1px solid #bbb;
  }

  .group {
    display: flex;
    align-items: center;
    padding: 0 3px 0 6px;
    border-right: 1px solid #aaa;
    border-bottom: 1px solid #aaa;
  }

  .group + .group:not(.float) {
    padding-left: 2px;
  }

  .zoom {
    margin-left: 16%;
    margin-right: 21px;
  }

  .sim {
    width: 142px;
    box-sizing: border-box;
  }

  .tool {
    width: 15px;
    height: 15px;
  }

  .tool .icon {
    width: 12px;
    height: 12px;
  }

  .sep {
    width: 1px;
    height: 13px;
    margin: 0 2px 0 1px;
    background: #b4b4b4;
  }

  .sunk {
    display: flex;
    height: 13px;
    align-items: center;
    border: 1px solid #c8c8c8;
    background: #f7f7f7;
  }

  .interactive .icon {
    width: 10px;
    height: 10px;
  }

  .caret {
    width: 8px;
    font-size: 6px;
  }

  .in-use {
    display: flex;
    align-items: center;
    width: 96px;
    height: 12px;
    margin: 0 1px;
    background: #e2e2e2;
    border: 1px solid #bdbdbd;
  }

  .in-use select {
    flex: 1;
    height: 12px;
    padding: 0 0 0 2px;
    border: 0;
    background: none;
    appearance: none;
  }

  .in-use path {
    fill: none;
    stroke: #777;
  }

  .main {
    display: flex;
    flex: 1;
    min-height: 372px;
  }

  .toolbox {
    display: flex;
    flex-direction: column;
    width: 98px;
    padding: 2px 4px 2px 2px;
    border-right: 1px solid #aaa;
  }

  .panel-head {
    display: flex;
    align-items: center;
    gap: 1px;
    height: 12px;
    margin-bottom: 3px;
  }

  .panel-head h2 {
    flex: 1;
    padding-left: 1px;
    background: linear-gradient(90deg, #bccfe2, #dbe6f2);
  }

  .box-tools {
    display: flex;
    gap: 1px;
    height: 15px;
    border-bottom: 1px solid #888;
    border-right: 1px solid #888;
    border-top: 1px solid #fff;
  }

  .tree {
    flex: 1;
    background: #fff;
    border: 1px solid #999;
    border-top: 0;
    border-right: 2px solid #777;
  }

  .node {
    display: flex;
    align-items: center;
    height: 12px;
    gap: 2px;
    padding-left: 5px;
  }

  .tree ul .node {
    padding-left: 20px;
  }

  .node .icon {
    width: 12px;
    height: 12px;
  }

  .twist {
    width: 3px;
    height: 3px;
    margin-right: 2px;
    border: 1px solid #b0b0b0;
    background: #e6e6e6;
  }

  .branch {
    width: 4px;
    height: 6px;
    margin-top: -6px;
    border-left: 1px solid #c4c4c4;
    border-bottom: 1px solid #c4c4c4;
  }

  .picked {
    background: #f0f0f0;
  }

  .tabs {
    display: flex;
    height: 12px;
    font-size: 7px;
  }

  .tabs button:not(.bevel) {
    padding: 0 2px;
    border: 1px solid #999;
    border-top: 0;
    border-left-color: #fff;
    margin-right: 1px;
  }

  .tabs .active {
    background: #f7f7f7;
  }

  .tabs .nets {
    padding-right: 8px;
  }

  .box-tabs {
    align-items: center;
    margin-top: 1px;
  }

  .box-tabs button:not(.bevel) {
    height: 12px;
    padding: 0;
    margin-right: 0;
  }

  .workspace {
    position: relative;
    display: flex;
    flex: 1;
    flex-direction: column;
    padding: 1px 2px 0 2px;
    border-top: 1px solid #888;
  }

  .canvas {
    display: grid;
    grid-template-columns: 104fr 492px 289fr 11px;
    flex: 1;
    max-height: 350px;
    background: #a9a9a9;
    border: 1px solid #666;
    border-right-color: #aaa;
    border-bottom-color: #ddd;
    overflow: hidden;
  }

  .sheet {
    grid-column: 2;
  }

  .gate {
    fill: #fff;
    stroke: #333;
  }

  .net {
    fill: #f02020;
    font: bold 7px 'Liberation Sans', sans-serif;
  }

  .pin {
    fill: #22922c;
    font: bold 7px 'DejaVu Sans', sans-serif;
  }

  .part-name {
    fill: #111;
    font: bold 7px 'Liberation Mono', monospace;
  }

  .xlc-text {
    fill: #111;
    font: bold 6px 'DejaVu Sans', sans-serif;
  }

  .micro,
  .ruler {
    fill: #555;
    font: 4px 'Liberation Sans', sans-serif;
  }

  .ruler {
    fill: #888;
  }

  .scrollbar {
    grid-column: 4;
    display: flex;
    flex-direction: column;
    background: #f0f0f0;
  }

  .scrollbar button {
    height: 15px;
  }

  .scrollbar path {
    fill: none;
    stroke: #555;
  }

  .thumb {
    flex: 1;
    background: #cdcdcd;
  }

  .doc-tabs {
    display: flex;
    align-items: center;
    height: 19px;
    padding-top: 1px;
  }

  .doc-tabs button {
    height: 14px;
    padding-right: 1px;
    border: 1px solid #999;
    border-top: 0;
    border-left: 0;
  }

  .doc-tabs .active {
    border-color: #111;
    background: #f7f7f7;
  }

  .cascade {
    margin-left: auto;
  }

  .dialog {
    position: absolute;
    top: 79px;
    right: 156px;
    width: 129px;
    background: #f0f0f0;
    border: 1px solid #777;
    box-sizing: border-box;
    box-shadow: 0 1px 4px rgba(0, 0, 0, 0.4);
  }

  .dialog-title {
    display: flex;
    align-items: center;
    justify-content: space-between;
    height: 19px;
    padding: 0 6px 0 3px;
    background: #fff;
  }

  .dialog path {
    fill: none;
    stroke: #222;
  }

  .dialog-body {
    padding: 0 5px 2px;
  }

  .caption {
    height: 11px;
    line-height: 11px;
    font-size: 7px;
  }

  .waves {
    display: flex;
    gap: 2px;
    padding: 0 1px 0 3px;
    margin-bottom: 1px;
  }

  .waves button {
    flex: 1;
    height: 11px;
    background: #e1e1e1;
    border: 1px solid #adadad;
  }

  .waves .on {
    background: #cce4f7;
    border-color: #1f6fb4;
  }

  .params {
    display: grid;
    grid-template-columns: 40px 51px 1fr;
    font-size: 7px;
    padding: 0 1px 0 3px;
  }

  .params label,
  .unit,
  .field {
    height: 12px;
    line-height: 12px;
  }

  .field {
    display: flex;
    background: #fff;
    border: 1px solid #888;
    border-top-width: 0;
    border-right-width: 0;
  }

  .field input {
    flex: 1;
    min-width: 0;
    padding: 0 3px;
    border: 0;
    background: none;
    outline: none;
  }

  .focus input {
    box-shadow: 0 0 0 1px #1f7fd4;
  }

  .spin {
    background: #f0f0f0;
  }

  .dialog .spin path:first-child {
    stroke: #bbb;
  }

  .dialog .spin path + path {
    fill: #222;
    stroke: none;
  }

  .unit {
    padding-left: 4px;
    background: #fff;
    border: 1px solid #888;
    border-top-width: 0;
  }

  .rise {
    width: 76px;
    height: 14px;
    margin: 4px 0 0 19px;
    background: #e1e1e1;
    border: 1px solid #0078d7;
    font-size: 7px;
  }

  .terminals {
    display: flex;
    justify-content: space-between;
    margin-top: 2px;
    padding: 4px 8px 1px 6px;
    border-top: 1px solid #ddd;
    font-size: 7px;
  }

  .terminals label {
    display: flex;
    flex-direction: column;
    align-items: center;
    line-height: 10px;
  }

  .terminals input {
    width: 9px;
    height: 9px;
    margin: 0;
    appearance: none;
    background: #fff;
    border: 1px solid #ccc;
    border-radius: 50%;
  }

  .instruments {
    display: flex;
    flex-direction: column;
    align-items: center;
    width: 16px;
    padding-top: 6px;
    margin-left: 1px;
    border-left: 1px solid #999;
  }

  .instrument {
    height: 14px;
  }

  .lab {
    margin-top: 5px;
  }

  .more {
    font-size: 6px;
    line-height: 8px;
  }

  .pale {
    color: #aaa;
  }

  .instruments hr {
    width: 100%;
    margin: 2px 0;
    border: 0;
    border-top: 1px solid #aaa;
  }

  .spreadsheet {
    display: flex;
    height: 96px;
    border-top: 1px solid #888;
    border-bottom: 1px solid #c8c8c8;
    box-sizing: border-box;
  }

  .side {
    display: flex;
    flex-direction: column;
    align-items: center;
    width: 14px;
    padding: 1px 1px 2px;
  }

  .side h2 {
    flex: 1;
    width: 13px;
    margin-top: 1px;
    background: #c4d5e8;
    writing-mode: vertical-rl;
    transform: rotate(180deg);
  }

  .log-area {
    display: flex;
    flex: 1;
    flex-direction: column;
    padding: 2px 2px 3px 1px;
  }

  .log {
    flex: 1;
    padding: 1px 4px;
    background: #fff;
    border: 1px solid #888;
    font-family: Lato, 'Open Sans', sans-serif;
  }

  .log p {
    line-height: 13px;
  }

  .status {
    display: flex;
    height: 12px;
    line-height: 12px;
  }

  .msg {
    flex: 1;
  }

  .cell {
    width: 15%;
    text-align: center;
    border-right: 1px solid #ccc;
  }

  .cell + .cell {
    width: 19%;
  }

  .meter {
    width: 28px;
    margin: 2px 3px;
    background: repeating-linear-gradient(90deg, #c4c4c4 0 1px, #ececec 1px 4px);
  }

  .taskbar {
    display: flex;
    height: 27px;
    background: linear-gradient(90deg, #1c2b35, #213836 40%, #24393a);
    color: #f4f4f4;
  }

  .start {
    width: 32px;
    background: #1c1f4a;
  }

  .search {
    display: flex;
    align-items: center;
    width: 221px;
    gap: 7px;
    padding-left: 8px;
    background: #f2f2f2;
    color: #222;
  }

  .search input {
    flex: 1;
    min-width: 0;
    height: 16px;
    padding: 0;
    border: 0;
    background: none;
    font-size: 10px;
    outline: none;
  }

  .search input::placeholder {
    color: #3a3a3a;
    opacity: 1;
  }

  .task {
    width: 33px;
    border-bottom: 2px solid transparent;
    border-top: 2px solid transparent;
  }

  .running {
    width: 27px;
    margin: 0 3px;
    border-bottom-color: #76b9ed;
  }

  .current {
    width: 33px;
    margin: 0;
    border-top-color: #53666a;
    background: #53666a;
  }

  .current .icon {
    width: 18px;
    height: 18px;
  }

  .b-tile {
    width: 15px;
    height: 15px;
    line-height: 15px;
    background: #1d4078;
    font-weight: 700;
    font-size: 9px;
  }

  .tray {
    display: flex;
    align-items: center;
    gap: 4px;
    margin-left: auto;
    padding-right: 15px;
  }

  .weather {
    margin-right: 6px;
    font-size: 9px;
  }

  .clock {
    margin: 0 4px 0 1px;
    font-size: 8px;
    text-align: center;
  }
</style>
